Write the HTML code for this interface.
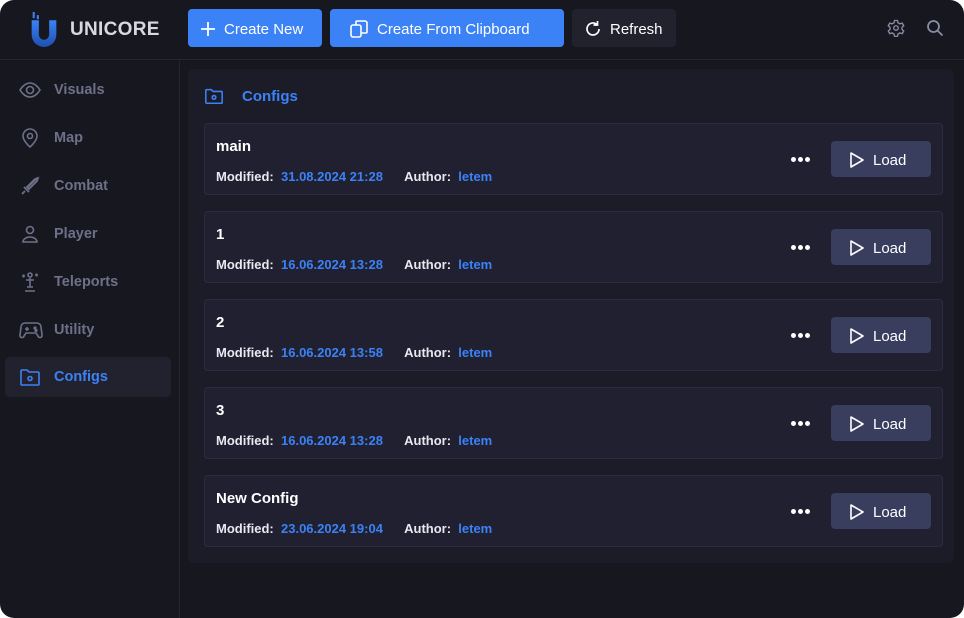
<!DOCTYPE html>
<html><head><style>
*{margin:0;padding:0;box-sizing:border-box}
body{width:964px;height:618px;background:#fff;font-family:"Liberation Sans",sans-serif;overflow:hidden}
.app{position:absolute;left:0;top:0;width:964px;height:618px;background:#17171f;border-radius:14px;overflow:hidden}
.hdr{position:absolute;left:0;top:0;width:964px;height:60px;border-bottom:1px solid #252535}
.logo{position:absolute;left:70px;top:19px;color:#d8d8e4;font-weight:bold;font-size:19px;letter-spacing:.3px}
.btn{position:absolute;top:9px;height:38px;border-radius:4px;color:#fff;font-size:15px;display:flex;align-items:center;gap:8px;padding-left:12px;padding-top:2px}
.side{position:absolute;left:0;top:61px;width:180px;height:557px;border-right:1px solid #252535}
.nav{position:absolute;left:5px;width:166px;height:40px;border-radius:5px;display:flex;align-items:center;color:#6e7089;font-weight:bold;font-size:14.5px}
.nav svg{position:absolute;left:14px}
.nav span{position:absolute;left:49px;top:12px}
.nav.act{background:#22222f;color:#3b82f6}
.panel{position:absolute;left:188px;top:69px;width:766px;height:494px;background:#1c1c29;border-radius:6px}
.card{position:absolute;left:16px;width:739px;height:72px;background:#202030;border:1px solid #2c2c40;border-radius:4px}
.nm{position:absolute;left:11px;top:14px;color:#fff;font-size:15px;font-weight:bold}
.meta{position:absolute;left:11px;top:45px;font-size:13px;font-weight:bold;color:#e8e8f0;white-space:nowrap}
.meta b{color:#3b82f6}
.dots{position:absolute;left:586px;top:33px;display:flex;gap:2px}
.dots i{width:5px;height:5px;border-radius:50%;background:#fff;display:block}
.load{position:absolute;left:626px;top:17px;width:100px;height:36px;background:#393d5e;border-radius:4px;color:#fff;font-size:15px;display:flex;align-items:center;padding-left:18px;padding-top:2px;gap:8px}
</style></head><body><div class="app">
<div class="hdr">
<svg style="position:absolute;left:29px;top:12px" width="30" height="35" viewBox="0 0 28 34"><defs><linearGradient id="g" x1="0" y1="0" x2="0" y2="1"><stop offset="0" stop-color="#3b82f6"/><stop offset="1" stop-color="#1e4fb0"/></linearGradient></defs><path d="M2 8h7v14a5 5 0 0 0 10 0V8h7v14a12 12 0 0 1-24 0z" fill="url(#g)"/><rect x="3" y="0" width="2" height="6" fill="#3b82f6"/><rect x="7" y="3" width="2" height="4" fill="#3b82f6"/></svg>
<div class="logo">UNICORE</div>
<div class="btn" style="left:188px;width:134px;background:#3b82f6"><svg width="16" height="16"><path d="M8 1v14M1 8h14" stroke="#fff" stroke-width="1.8"/></svg>Create New</div>
<div class="btn" style="left:330px;width:234px;background:#3b82f6;padding-left:19px"><svg width="20" height="20" viewBox="0 0 20 20" fill="none" stroke="#fff" stroke-width="1.6"><rect x="2" y="6" width="10" height="12" rx="2"/><path d="M7 6V3a1 1 0 0 1 1-1h8a2 2 0 0 1 2 2v9a1 1 0 0 1-1 1h-5"/></svg>Create From Clipboard</div>
<div class="btn" style="left:572px;width:104px;background:#22222f"><svg width="18" height="18" viewBox="0 0 18 18" fill="none" stroke="#fff" stroke-width="1.7"><path d="M15 9a6 6 0 1 1-2-4.5M13.5 1v4h-4"/></svg>Refresh</div>
<svg style="position:absolute;left:887px;top:19px" width="18" height="18" viewBox="0 0 24 24" fill="none" stroke="#8a8ca4" stroke-width="1.8"><circle cx="12" cy="12" r="3"/><path d="M10 2h4l.7 3 2.6 1.5 3-1 2 3.5-2.3 2v3l2.3 2-2 3.5-3-1-2.6 1.5-.7 3h-4l-.7-3-2.6-1.5-3 1-2-3.5 2.3-2v-3l-2.3-2 2-3.5 3 1L9.3 5z"/></svg>
<svg style="position:absolute;left:926px;top:19px" width="18" height="18" viewBox="0 0 18 18" fill="none" stroke="#8a8ca4" stroke-width="1.8"><circle cx="7.5" cy="7.5" r="5.5"/><path d="M11.5 11.5l5 5"/></svg>
</div>
<div class="side">
<div class="nav" style="top:9px"><svg width="22" height="22" viewBox="0 0 22 22" fill="none" stroke="#6e7089" stroke-width="1.6"><path d="M1 11s4-7 10-7 10 7 10 7-4 7-10 7S1 11 1 11z"/><circle cx="11" cy="11" r="3.5"/></svg><span>Visuals</span></div>
<div class="nav" style="top:57px"><svg width="22" height="22" viewBox="0 0 22 22" fill="none" stroke="#6e7089" stroke-width="1.6"><path d="M11 20s-7-6-7-11a7 7 0 0 1 14 0c0 5-7 11-7 11z"/><circle cx="11" cy="9" r="2.5"/></svg><span>Map</span></div>
<div class="nav" style="top:105px"><svg width="22" height="22" viewBox="0 0 22 22" fill="none" stroke="#6e7089" stroke-width="1.8"><path d="M18 3l-9 9M19 3l-1 3-8 8-2-2 8-8zM5 12l5 5M3 19l3-3"/></svg><span>Combat</span></div>
<div class="nav" style="top:153px"><svg width="22" height="22" viewBox="0 0 22 22" fill="none" stroke="#6e7089" stroke-width="1.6"><circle cx="11" cy="7" r="3.5"/><path d="M4 19a7 5 0 0 1 14 0z"/></svg><span>Player</span></div>
<div class="nav" style="top:201px"><svg width="22" height="22" viewBox="0 0 22 22" fill="none" stroke="#6e7089" stroke-width="1.6"><circle cx="11" cy="4" r="2"/><path d="M7 9h8M11 7v9M8 16h6M6 20h10M3 5h3M4.5 3.5v3M16 4h3M17.5 2.5v3"/></svg><span>Teleports</span></div>
<div class="nav" style="top:249px"><svg width="24" height="22" viewBox="0 0 24 22" fill="none" stroke="#6e7089" stroke-width="1.6"><path d="M6 4h12a4 4 0 0 1 4 4l1 8a2 2 0 0 1-4 1l-2-3H7l-2 3a2 2 0 0 1-4-1l1-8a4 4 0 0 1 4-4z"/><path d="M6 10h4M8 8v4"/><circle cx="16" cy="9" r=".8"/><circle cx="17" cy="11.5" r=".8"/></svg><span>Utility</span></div>
<div class="nav act" style="top:296px"><svg width="22" height="22" viewBox="0 0 22 22" fill="none" stroke="#3b82f6" stroke-width="1.6"><path d="M2 5a1 1 0 0 1 1-1h5l2 2h9a1 1 0 0 1 1 1v11a1 1 0 0 1-1 1H3a1 1 0 0 1-1-1z"/><circle cx="11" cy="12.5" r="2"/></svg><span>Configs</span></div>
</div>
<div class="panel">
<svg style="position:absolute;left:16px;top:17px" width="20" height="20" viewBox="0 0 22 22" fill="none" stroke="#3b82f6" stroke-width="1.7"><path d="M2 5a1 1 0 0 1 1-1h5l2 2h9a1 1 0 0 1 1 1v11a1 1 0 0 1-1 1H3a1 1 0 0 1-1-1z"/><circle cx="11" cy="12.5" r="2"/></svg>
<div style="position:absolute;left:54px;top:19px;color:#3b82f6;font-weight:bold;font-size:15px">Configs</div>
<div class="card" style="top:54px"><div class="nm">main</div><div class="meta">Modified:&nbsp; <b>31.08.2024 21:28</b>&nbsp;&nbsp;&nbsp;&nbsp;&nbsp; Author:&nbsp; <b>letem</b></div><div class="dots"><i></i><i></i><i></i></div><div class="load"><svg width="16" height="18"><path d="M2 2l12 7-12 7z" fill="none" stroke="#fff" stroke-width="1.6" stroke-linejoin="round"/></svg>Load</div></div>
<div class="card" style="top:142px"><div class="nm">1</div><div class="meta">Modified:&nbsp; <b>16.06.2024 13:28</b>&nbsp;&nbsp;&nbsp;&nbsp;&nbsp; Author:&nbsp; <b>letem</b></div><div class="dots"><i></i><i></i><i></i></div><div class="load"><svg width="16" height="18"><path d="M2 2l12 7-12 7z" fill="none" stroke="#fff" stroke-width="1.6" stroke-linejoin="round"/></svg>Load</div></div>
<div class="card" style="top:230px"><div class="nm">2</div><div class="meta">Modified:&nbsp; <b>16.06.2024 13:58</b>&nbsp;&nbsp;&nbsp;&nbsp;&nbsp; Author:&nbsp; <b>letem</b></div><div class="dots"><i></i><i></i><i></i></div><div class="load"><svg width="16" height="18"><path d="M2 2l12 7-12 7z" fill="none" stroke="#fff" stroke-width="1.6" stroke-linejoin="round"/></svg>Load</div></div>
<div class="card" style="top:318px"><div class="nm">3</div><div class="meta">Modified:&nbsp; <b>16.06.2024 13:28</b>&nbsp;&nbsp;&nbsp;&nbsp;&nbsp; Author:&nbsp; <b>letem</b></div><div class="dots"><i></i><i></i><i></i></div><div class="load"><svg width="16" height="18"><path d="M2 2l12 7-12 7z" fill="none" stroke="#fff" stroke-width="1.6" stroke-linejoin="round"/></svg>Load</div></div>
<div class="card" style="top:406px"><div class="nm">New Config</div><div class="meta">Modified:&nbsp; <b>23.06.2024 19:04</b>&nbsp;&nbsp;&nbsp;&nbsp;&nbsp; Author:&nbsp; <b>letem</b></div><div class="dots"><i></i><i></i><i></i></div><div class="load"><svg width="16" height="18"><path d="M2 2l12 7-12 7z" fill="none" stroke="#fff" stroke-width="1.6" stroke-linejoin="round"/></svg>Load</div></div>
</div>
</div></body></html>
